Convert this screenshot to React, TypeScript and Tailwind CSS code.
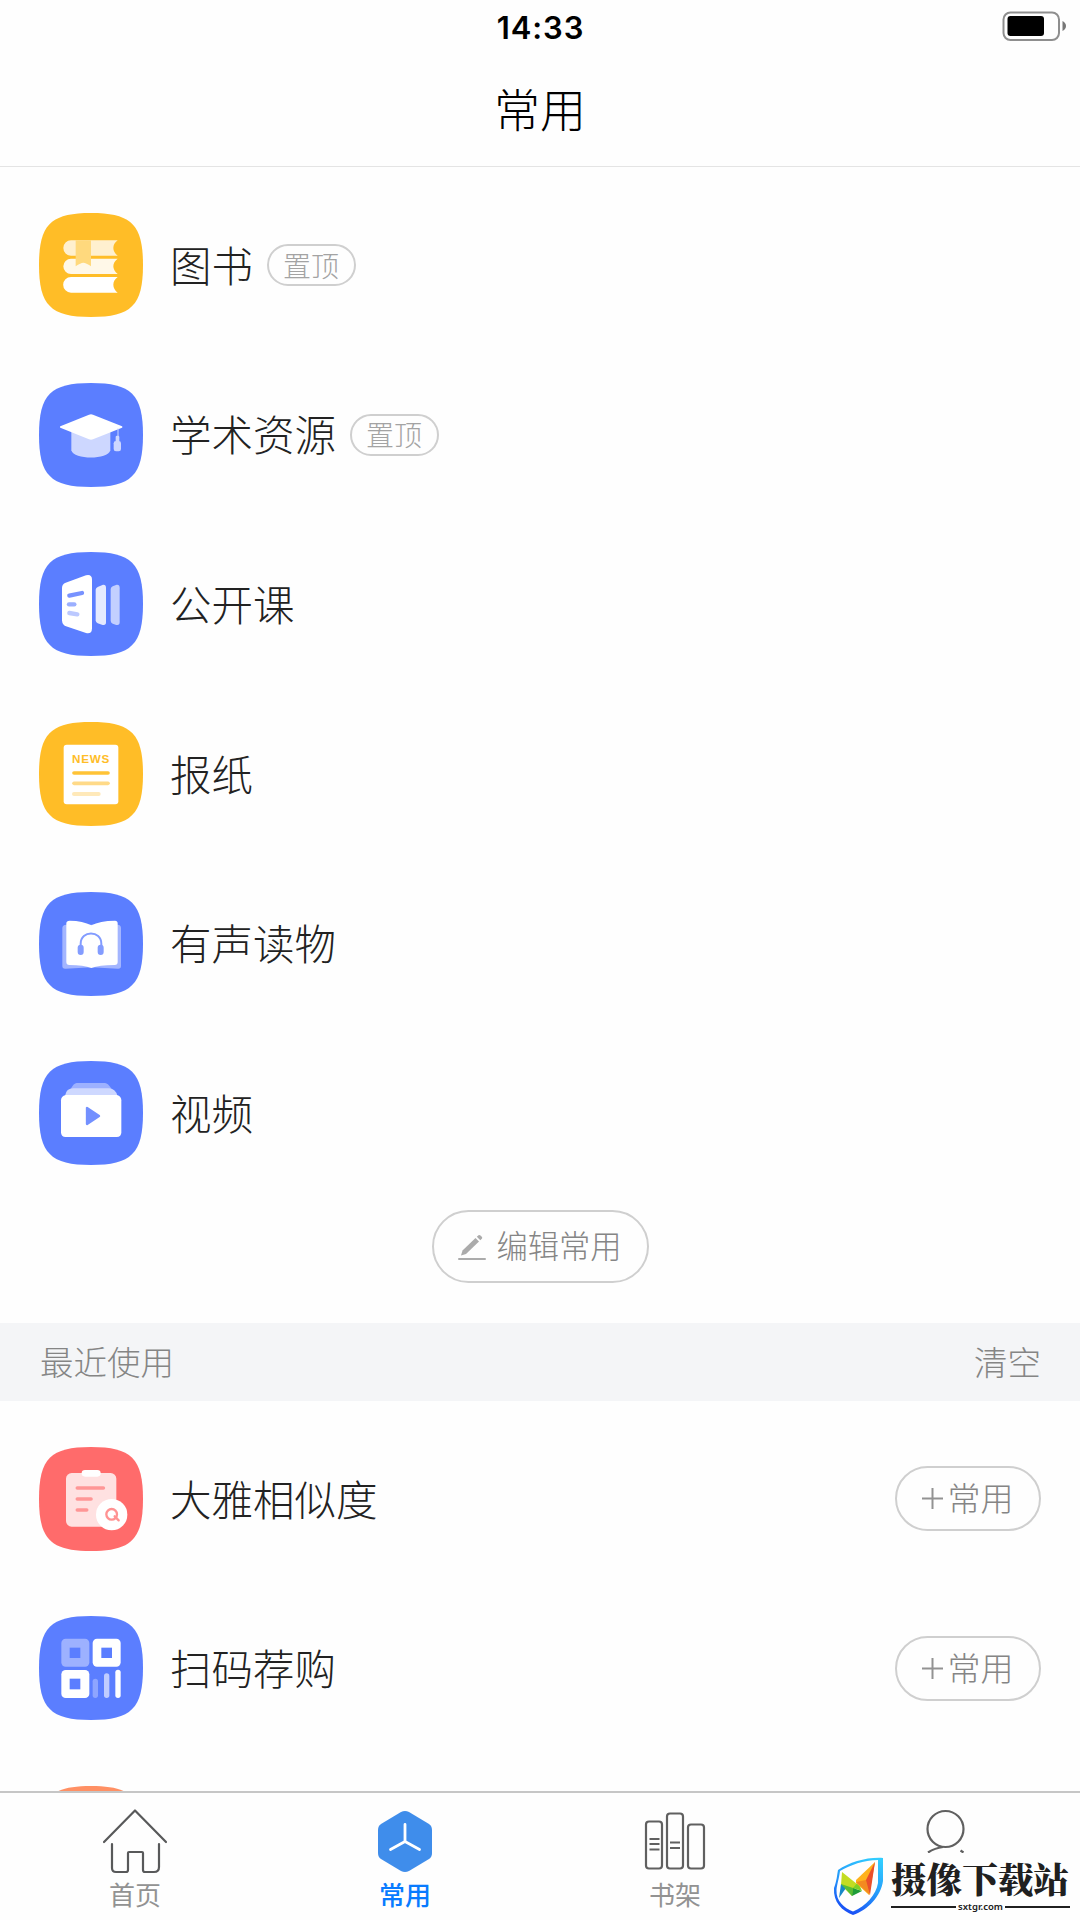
import React from 'react';

const BLUE = '#5B7EFF';
const YELLOW = '#FFBD27';

interface TileProps {
  color: string;
  children?: React.ReactNode;
}

// Rounded "squircle" that every app icon sits on
const Tile: React.FC<TileProps> = ({ color, children }) => (
  <svg className="w-[104px] h-[104px] shrink-0" viewBox="0 0 312 312" fill="none">
    <path d="M156 0C277 0 312 35 312 156S277 312 156 312S0 277 0 156S35 0 156 0Z" fill={color} />
    {children}
  </svg>
);

const BooksIcon = () => (
  <Tile color={YELLOW}>
    <path d="M96 82H236Q223 92 223 105T236 128H96A23 23 0 0 1 96 82Z" fill="#FFF0CF" />
    <path d="M96 137H236Q223 147 223 160T236 183H96A23 23 0 0 1 96 137Z" fill="#FFF8E8" />
    <path d="M96 192H236Q223 202 223 215T236 239H96A23.500 23.500 0 0 1 96 192Z" fill="#fff" />
    <path d="M110 82H156V160Q141 149 133 149T110 160Z" fill="#FFD97D" />
  </Tile>
);

const AcademicIcon = () => (
  <Tile color={BLUE}>
    <path d="M97 140V202C104 231 207 231 214 202V140Z" fill="#CDD7FF" />
    <path d="M64 130L150 95Q156 93 162 95L249 130Q252 132 249 134L162 169Q156 171 150 169L64 134Q61 132 64 130Z" fill="#fff" />
    <path d="M237 136V162" stroke="#CDD7FF" strokeWidth="3" />
    <rect x="230" y="158" width="11" height="20" rx="4" fill="#CDD7FF" />
    <rect x="224" y="174" width="22" height="31" rx="7" fill="#CDD7FF" />
  </Tile>
);

const CourseIcon = () => (
  <Tile color={BLUE}>
    <path d="M80 92L141 70Q159 66 159 83V230Q158 247 141 243L81 223Q69 218 69 205V108Q69 96 80 92Z" fill="#fff" />
    <path d="M91 131L129 123" stroke="#7892FF" strokeWidth="13" strokeLinecap="round" />
    <path d="M90 157H106" stroke="#9BAFFF" strokeWidth="13" strokeLinecap="round" />
    <path d="M91 183L115 187" stroke="#BCC9FF" strokeWidth="13" strokeLinecap="round" />
    <path d="M176 105L192 98Q201 97 201 107V211Q201 221 191 219L176 214Q170 211 170 205V113Q170 108 176 105Z" fill="#E5EAFF" />
    <path d="M221 103L233 98Q242 97 242 107V211Q242 221 232 219L221 215Q215 212 215 206V111Q215 106 221 103Z" fill="#C3CFFF" />
  </Tile>
);

const NewsIcon = () => (
  <Tile color={YELLOW}>
    <rect x="74" y="68" width="164" height="179" rx="9" fill="#fff" />
    <text
      x="99"
      y="124"
      fontSize="35"
      fontWeight="700"
      fontFamily="'Liberation Sans', Arial, sans-serif"
      letterSpacing="2.4"
      fill={YELLOW}
    >
      NEWS
    </text>
    <path d="M105 153H207" stroke="#FFC336" strokeWidth="11" strokeLinecap="round" />
    <path d="M105 184H207" stroke="#FFDA88" strokeWidth="11" strokeLinecap="round" />
    <path d="M105 216H179" stroke="#FFE9B9" strokeWidth="12" strokeLinecap="round" />
  </Tile>
);

const AudioIcon = () => (
  <Tile color={BLUE}>
    <path d="M82 98H236Q246 99 246 108V222Q246 231 236 230L158 226L80 230Q70 231 70 222V108Q70 99 82 98Z" fill="#A3B5FF" />
    <path d="M92 86Q132 86 157 100Q182 86 228 86Q236 86 236 94V210Q236 219 227 219Q180 219 157 228Q134 219 91 219Q82 219 82 210V94Q82 86 92 86Z" fill="#fff" />
    <path d="M125 166V155C125 114 187 114 187 155V166" stroke="#839CFF" strokeWidth="6" />
    <rect x="116" y="158" width="18" height="31" rx="9" fill="#839CFF" />
    <rect x="176" y="158" width="18" height="31" rx="9" fill="#839CFF" />
  </Tile>
);

const VideoIcon = () => (
  <Tile color={BLUE}>
    <path d="M95 84Q104 66 113 66H198Q207 66 218 84Z" fill="#9DB1FF" />
    <path d="M78 104Q82 82 103 82H211Q230 84 235 104Z" fill="#CED8FF" />
    <path d="M80 102H234Q247 106 247 118V214Q247 228 233 228H80Q66 228 66 214V118Q66 106 80 102Z" fill="#fff" />
    <path d="M144 141V189L180 165Z" fill="#7390FF" stroke="#7390FF" strokeWidth="7" strokeLinejoin="round" />
  </Tile>
);

const SimilarityIcon = () => (
  <Tile color="#FF6B6B">
    <rect x="81" y="78" width="151" height="161" rx="17" fill="#FFE1E1" />
    <rect x="128" y="69" width="57" height="20" rx="10" fill="#fff" />
    <path d="M115 123H193M115 156H156M115 189H143" stroke="#FF9696" strokeWidth="11" strokeLinecap="round" />
    <circle cx="218" cy="203" r="47" fill="#fff" />
    <circle cx="218" cy="202" r="16" stroke="#FF9292" strokeWidth="7" />
    <path d="M227 208L239 220" stroke="#FF9292" strokeWidth="7" strokeLinecap="round" />
  </Tile>
);

const ScanIcon = () => (
  <Tile color={BLUE}>
    <rect x="67" y="68" width="84" height="84" rx="13" fill="#9DB1FF" />
    <rect x="92" y="95" width="32" height="31" fill={BLUE} />
    <rect x="161" y="68" width="84" height="84" rx="13" fill="#fff" />
    <rect x="187" y="95" width="32" height="31" fill={BLUE} />
    <rect x="67" y="162" width="84" height="84" rx="13" fill="#fff" />
    <rect x="92" y="188" width="32" height="32" fill={BLUE} />
    <rect x="161" y="188" width="16" height="58" rx="8" fill="#8EA5FF" />
    <rect x="195" y="172" width="16" height="74" rx="8" fill="#C0CCFF" />
    <rect x="229" y="161" width="16" height="85" rx="8" fill="#fff" />
  </Tile>
);

const favorites = [
  { name: '图书', icon: <BooksIcon />, pinned: true },
  { name: '学术资源', icon: <AcademicIcon />, pinned: true },
  { name: '公开课', icon: <CourseIcon /> },
  { name: '报纸', icon: <NewsIcon /> },
  { name: '有声读物', icon: <AudioIcon /> },
  { name: '视频', icon: <VideoIcon /> },
];

const recents = [
  { name: '大雅相似度', icon: <SimilarityIcon /> },
  { name: '扫码荐购', icon: <ScanIcon /> },
  { name: '', icon: <Tile color="#FF9064" /> },
];

const StatusBar = () => (
  <div className="relative flex h-[54px] items-center justify-center">
    <span className="pl-[1px] font-['Inter'] text-[31px] leading-none font-semibold tracking-[0.9px] text-black">14:33</span>
    <svg className="absolute right-[13px] top-[11px] w-[65px] h-[30px]" viewBox="0 0 65 30" fill="none">
      <rect x="1.500" y="1.500" width="55.500" height="27.500" rx="7" stroke="#8E8E8E" strokeWidth="2" />
      <rect x="5.500" y="5" width="36.500" height="20" rx="3" fill="#000" />
      <path d="M60.500 10Q64 12 64 15T60.500 20Z" fill="#777" />
    </svg>
  </div>
);

const Watermark = () => (
  <div className="absolute bottom-0 right-0 flex h-[67px] w-[250px] items-start bg-[#fefefe]">
    <svg className="ml-[3px] mt-[4px] h-[59px] w-[52px] shrink-0" viewBox="0 0 52 59" fill="none">
      <defs>
        <linearGradient id="shield" x1="40" y1="0" x2="14" y2="58" gradientUnits="userSpaceOnUse">
          <stop stopColor="#32CDFF" />
          <stop offset="0.500" stopColor="#259BFA" />
          <stop offset="1" stopColor="#1848F5" />
        </linearGradient>
      </defs>
      <path
        d="M50 1V24C48 39 35 53 20 58C9 54 0 45 1 31C4 23 4 18 5 13C17 5 34 0 50 1ZM45 3C30 3 18 8 7 14C6 22 4 27 3.500 33C3 44 11 51 20 54.500C33 49 43 38 45 26Z"
        fill="url(#shield)"
        fillRule="evenodd"
      />
      <path d="M9 15L24 27L19 39L8 28Z" fill="#C3DC22" />
      <path d="M8 27L13 31L6 41Z" fill="#1788C8" />
      <path d="M8 27L20 31L19 39Z" fill="#57BE35" />
      <path d="M19 39L20 31L29 34Z" fill="#209D39" />
      <path d="M20 31L25 25L29 34Z" fill="#80CF25" />
      <path d="M23 23L42 5L36 38L23 26Z" fill="#FFB21D" />
      <path d="M42 5L32 25L37 38Z" fill="#EA4F2B" />
      <path d="M23 25L33 23L37 38Z" fill="#F38A20" />
    </svg>
    <div className="ml-[6px] mt-[3px] w-[179px] text-[#202020]">
      <div className="whitespace-nowrap font-['Noto_Serif_CJK_SC','Noto_Sans_CJK_SC',serif] text-[35.6px] leading-[43px] font-black">摄像下载站</div>
      <div className="flex h-[14px] items-center gap-[2px] pt-[2px]">
        <i className="h-[2px] flex-1 bg-[#202020]" />
        <span className="font-['Noto_Sans'] text-[9.5px] leading-[12px] font-semibold">sxtgr.com</span>
        <i className="h-[2px] flex-1 bg-[#202020]" />
      </div>
    </div>
  </div>
);

const TabBar = () => (
  <nav className="relative grid h-[129px] shrink-0 grid-cols-4 border-t-2 border-[#c6c6c6] bg-[#fefefe] text-[26px] leading-[30px] text-[#929292]">
    <div className="flex flex-col items-center pt-[14px]">
      <svg className="h-[70px] w-[70px]" viewBox="0 0 70 70" fill="none" stroke="#58595A" strokeWidth="2.200" strokeLinecap="round" strokeLinejoin="round">
        <path d="M4 35L35 3.500L66 35" />
        <path d="M12 37V61Q12 65 16 65H26Q28 65 28 63V46Q28 45 29 45H42Q43 45 43 46V63Q43 65 45 65H54Q59 65 59 60V37" />
      </svg>
      <span className="mt-[2px]">首页</span>
    </div>
    <div className="flex flex-col items-center pt-[14px] font-medium text-[#087BFF]">
      <svg className="h-[70px] w-[70px]" viewBox="0 0 70 70" fill="none">
        <path d="M31 5Q35 3 39 5L59 17Q62 19 62 23V46Q62 50 59 52L39 64Q35 66 31 64L11 52Q8 50 8 46V23Q8 19 11 17Z" fill="#3F8DEB" />
        <path d="M35 17.500V34.500M35 34.500L20.500 42.500M35 34.500L49.500 42.500" stroke="#fff" strokeWidth="2.800" strokeLinecap="round" />
      </svg>
      <span className="mt-[2px]">常用</span>
    </div>
    <div className="flex flex-col items-center pt-[14px]">
      <svg className="h-[70px] w-[70px]" viewBox="0 0 70 70" fill="none" stroke="#606060" strokeWidth="2.200">
        <rect x="6" y="14.500" width="16" height="47" rx="3" />
        <rect x="27" y="6.500" width="16" height="55" rx="3" />
        <rect x="48" y="17.500" width="16" height="44" rx="3" />
        <path d="M9.500 32H19.500M9.500 37H19.500M9.500 42.500H19.500M30 35.500H40M30 41H40" />
      </svg>
      <span className="mt-[2px]">书架</span>
    </div>
    <div className="flex flex-col items-center pt-[14px]">
      <svg className="h-[70px] w-[70px]" viewBox="0 0 70 70" fill="none" stroke="#606060" strokeWidth="2.200">
        <circle cx="35.500" cy="22" r="18" />
        <path d="M18 45.500Q25 41 33 40M50.500 43.500L53.500 45.500" />
      </svg>
    </div>
    <Watermark />
  </nav>
);

const App: React.FC = () => {
  return (
    <div className="flex h-[1920px] w-[1080px] flex-col overflow-hidden bg-[#fefefe] font-['Noto_Sans_CJK_SC',sans-serif]">
      <header className="h-[167px] shrink-0 border-b border-[#e4e4e4]">
        <StatusBar />
        <h1 className="pt-[28px] text-center text-[46px] leading-[50px] font-light text-black">常用</h1>
      </header>

      <main className="min-h-0 flex-1 overflow-hidden">
        <section className="px-[39px] pt-[13.5px]">
          {favorites.map((item) => (
            <div key={item.name} className="flex h-[169.6px] items-center">
              {item.icon}
              <span className="ml-[27px] pb-[3px] text-[41.5px] leading-[50px] font-light text-[#222]">{item.name}</span>
              {item.pinned && (
                <span className="ml-[13.5px] flex h-[42px] w-[89px] items-center justify-center rounded-full border-2 border-[#cfcfcf] pb-[1px] text-[28px] leading-none font-light text-[#a3a3a3]">
                  置顶
                </span>
              )}
            </div>
          ))}
        </section>

        <div className="flex h-[124.5px] justify-center pt-[12px]">
          <button className="flex h-[73px] w-[217px] items-center justify-center rounded-full border-2 border-[#cfcfcf] text-[31.3px] leading-none font-light text-[#858585]">
            <svg className="mr-[10px] h-[28px] w-[28px]" viewBox="0 0 28 28">
              <path d="M3 22.500L4.500 17.500L17.500 5L21 8.500L8 21Z" fill="#ABABAB" />
              <path d="M18.800 3.700L20.500 2.200Q21.500 1.500 22.500 2.500L24 4Q24.600 5 23.800 5.800L22.300 7.300Z" fill="#ABABAB" />
              <path d="M1 26H27" stroke="#ABABAB" strokeWidth="2" strokeLinecap="round" />
            </svg>
            <span className="pb-[3px]">编辑常用</span>
          </button>
        </div>

        <div className="flex h-[78.400px] items-center justify-between bg-[#f4f5f7] pl-[40px] pr-[39px] pb-[3px] text-[33.500px] leading-none font-light text-[#858585]">
          <span>最近使用</span>
          <span>清空</span>
        </div>

        <section className="px-[39px] pt-[13px]">
          {recents.map((item) => (
            <div key={item.name} className="flex h-[169.6px] items-center">
              {item.icon}
              <span className="ml-[27px] pb-[2px] text-[41.5px] leading-[50px] font-light text-[#222]">{item.name}</span>
              {item.name && (
                <button className="ml-auto flex h-[65px] w-[146px] items-center justify-center rounded-full border-2 border-[#cfcfcf] text-[33px] leading-none font-light text-[#858585]">
                  <svg className="mr-[5px] h-[21px] w-[21px]" viewBox="0 0 21 21" stroke="#929292" strokeWidth="2">
                    <path d="M0 10.500H21M10.500 0V21" />
                  </svg>
                  <span className="pr-[1px] pb-[2px]">常用</span>
                </button>
              )}
            </div>
          ))}
        </section>
      </main>

      <TabBar />
    </div>
  );
};

export default App;
